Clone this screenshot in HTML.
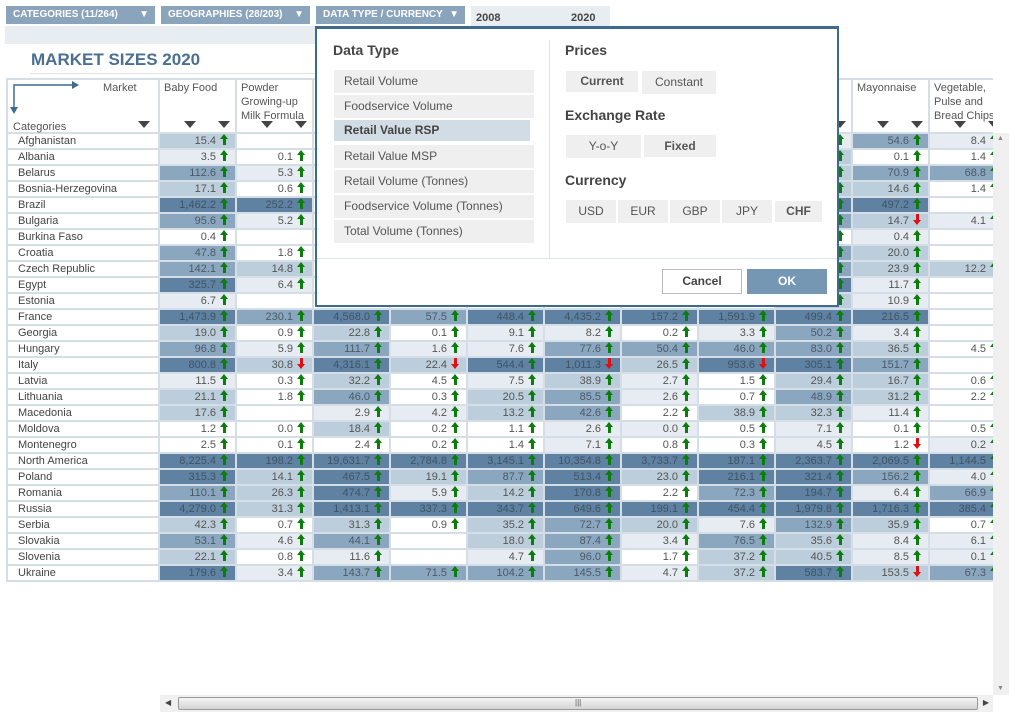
<!DOCTYPE html>
<html><head><meta charset="utf-8"><style>
*{box-sizing:border-box;margin:0;padding:0}
body{width:1015px;height:717px;background:#fff;font-family:"Liberation Sans",sans-serif;position:relative;overflow:hidden;color:#555}
.btn{position:absolute;top:6px;height:18px;background:#8aa4bc;color:#fff;font-size:10px;font-weight:bold;line-height:18px;padding-left:7px}
.btn b{position:absolute;right:6px;top:0;font-size:10px}
.wrap{position:absolute;left:0;top:0;width:993px;height:717px;overflow:hidden}
table{position:absolute;left:6px;top:78px;border-spacing:2px;background:#d5dee7;table-layout:fixed;width:982px}
td{height:14px;font-size:11px;text-align:right;padding-right:6px;white-space:nowrap;overflow:hidden;line-height:14px;background:#fff;color:#555}
td.n{text-align:left;padding-left:10px;color:#444}
.d{background:#5f82a3;color:#3f5366}.m{background:#8ba7bf;color:#4a5a6a}.l{background:#bccddb}.x{background:#e6ecf1}.w{background:#fff}
.u,.dn{display:inline-block;position:relative;width:9px;height:11px;vertical-align:-1px;margin-left:4px}
.u::before{content:"";position:absolute;left:0;top:0;border-left:4.5px solid transparent;border-right:4.5px solid transparent;border-bottom:5px solid #0a7d0a}
.u::after{content:"";position:absolute;left:3px;top:5px;width:3px;height:6px;background:#0a7d0a}
.dn::before{content:"";position:absolute;left:0;bottom:0;border-left:4.5px solid transparent;border-right:4.5px solid transparent;border-top:5px solid #e01010}
.dn::after{content:"";position:absolute;left:3px;top:0;width:3px;height:6px;background:#e01010}
th{height:52px;background:#fff;font-weight:normal;font-size:11px;text-align:left;vertical-align:top;padding:1px 4px;color:#555;line-height:14px;position:relative}
.s{position:absolute;bottom:4px;width:0;height:0;border-left:6px solid transparent;border-right:6px solid transparent;border-top:7px solid #444}
.dlg{position:absolute;left:315px;top:26px;width:524px;height:281px;background:#fff;border:2px solid #3e6a90;border-top-width:3px}
.h{position:absolute;font-size:14px;font-weight:bold;color:#444}
.li{position:absolute;left:17px;width:200px;height:23px;background:#efefef;font-size:12px;line-height:23px;padding-left:10px;color:#555}
.sel{background:#d2dce5;font-weight:bold;color:#444}
.bx{position:absolute;height:23px;background:#efefef;font-size:12px;line-height:23px;text-align:center;color:#555}
</style></head><body>
<div style="position:absolute;left:5px;top:26px;width:310px;height:18px;background:#e8edf1"></div>
<div class="btn" style="left:6px;width:149px">CATEGORIES (11/264)<b>▼</b></div>
<div class="btn" style="left:161px;width:149px">GEOGRAPHIES (28/203)<b>▼</b></div>
<div class="btn" style="left:316px;width:149px">DATA TYPE / CURRENCY<b>▼</b></div>
<div style="position:absolute;left:471px;top:6px;width:139px;height:21px;background:#e8edf1;font-size:11px;font-weight:bold;color:#444;line-height:25px"><span style="position:absolute;left:5px">2008</span><span style="position:absolute;left:100px">2020</span></div>
<div style="position:absolute;left:31px;top:50px;font-size:17px;font-weight:bold;color:#4a6f93">MARKET SIZES 2020</div>
<div style="position:absolute;left:30px;top:73px;width:290px;height:1px;background:#dde3e8"></div>
<div class="wrap">
<table>
<colgroup><col style="width:150px"><col style="width:75px"><col style="width:75px"><col style="width:75px"><col style="width:75px"><col style="width:75px"><col style="width:75px"><col style="width:75px"><col style="width:75px"><col style="width:75px"><col style="width:75px"><col style="width:75px"></colgroup>
<tr><th style="padding:0"><svg width="150" height="53" style="position:absolute;left:0;top:0"><path d="M6 27V5H64" fill="none" stroke="#3e6a90" stroke-width="1.5"/><path d="M64 1l7 4-7 4z" fill="#3e6a90"/><path d="M2 27h8l-4 7z" fill="#3e6a90"/></svg><span style="position:absolute;left:95px;top:1px">Market</span><span style="position:absolute;left:5px;top:40px">Categories</span><span class="s" style="left:130px"></span></th>
<th>Baby Food<span class="s" style="left:24px"></span><span class="s" style="left:58px"></span></th>
<th>Powder Growing-up Milk Formula<span class="s" style="left:24px"></span><span class="s" style="left:58px"></span></th>
<th></th><th></th><th></th><th></th><th></th><th></th>
<th>n<span class="s" style="left:58px"></span></th>
<th>Mayonnaise<span class="s" style="left:24px"></span><span class="s" style="left:58px"></span></th>
<th>Vegetable, Pulse and Bread Chips<span class="s" style="left:24px"></span><span class="s" style="left:58px"></span></th></tr>
<tr><td class="n">Afghanistan</td><td class="l">15.4<i class="u"></i></td><td class="w"></td><td></td><td></td><td></td><td></td><td></td><td></td><td class="x"><i class="u"></i></td><td class="m">54.6<i class="u"></i></td><td class="x">8.4<i class="u"></i></td></tr>
<tr><td class="n">Albania</td><td class="x">3.5<i class="u"></i></td><td class="w">0.1<i class="u"></i></td><td></td><td></td><td></td><td></td><td></td><td></td><td class="l"><i class="u"></i></td><td class="w">0.1<i class="u"></i></td><td class="w">1.4<i class="u"></i></td></tr>
<tr><td class="n">Belarus</td><td class="m">112.6<i class="u"></i></td><td class="x">5.3<i class="u"></i></td><td></td><td></td><td></td><td></td><td></td><td></td><td class="l"><i class="u"></i></td><td class="m">70.9<i class="u"></i></td><td class="m">68.8<i class="u"></i></td></tr>
<tr><td class="n">Bosnia-Herzegovina</td><td class="l">17.1<i class="u"></i></td><td class="w">0.6<i class="u"></i></td><td></td><td></td><td></td><td></td><td></td><td></td><td class="l"><i class="u"></i></td><td class="l">14.6<i class="u"></i></td><td class="w">1.4<i class="u"></i></td></tr>
<tr><td class="n">Brazil</td><td class="d">1,462.2<i class="u"></i></td><td class="d">252.2<i class="u"></i></td><td></td><td></td><td></td><td></td><td></td><td></td><td class="d"><i class="u"></i></td><td class="d">497.2<i class="u"></i></td><td class="w"></td></tr>
<tr><td class="n">Bulgaria</td><td class="m">95.6<i class="u"></i></td><td class="x">5.2<i class="u"></i></td><td></td><td></td><td></td><td></td><td></td><td></td><td class="m"><i class="u"></i></td><td class="l">14.7<i class="dn"></i></td><td class="x">4.1<i class="u"></i></td></tr>
<tr><td class="n">Burkina Faso</td><td class="w">0.4<i class="u"></i></td><td class="w"></td><td></td><td></td><td></td><td></td><td></td><td></td><td class="w"><i class="u"></i></td><td class="x">0.4<i class="u"></i></td><td class="w"></td></tr>
<tr><td class="n">Croatia</td><td class="m">47.8<i class="u"></i></td><td class="w">1.8<i class="u"></i></td><td></td><td></td><td></td><td></td><td></td><td></td><td class="m"><i class="u"></i></td><td class="l">20.0<i class="u"></i></td><td class="w"></td></tr>
<tr><td class="n">Czech Republic</td><td class="m">142.1<i class="u"></i></td><td class="l">14.8<i class="u"></i></td><td></td><td></td><td></td><td></td><td></td><td></td><td class="m"><i class="u"></i></td><td class="l">23.9<i class="u"></i></td><td class="l">12.2<i class="u"></i></td></tr>
<tr><td class="n">Egypt</td><td class="d">325.7<i class="u"></i></td><td class="x">6.4<i class="u"></i></td><td></td><td></td><td></td><td></td><td></td><td></td><td class="d"><i class="u"></i></td><td class="x">11.7<i class="u"></i></td><td class="w"></td></tr>
<tr><td class="n">Estonia</td><td class="x">6.7<i class="u"></i></td><td class="w"></td><td></td><td></td><td></td><td></td><td></td><td></td><td class="l"><i class="u"></i></td><td class="x">10.9<i class="u"></i></td><td class="w"></td></tr>
<tr><td class="n">France</td><td class="d">1,473.9<i class="u"></i></td><td class="m">230.1<i class="u"></i></td><td class="d">4,568.0<i class="u"></i></td><td class="m">57.5<i class="u"></i></td><td class="d">448.4<i class="u"></i></td><td class="d">4,435.2<i class="u"></i></td><td class="d">157.2<i class="u"></i></td><td class="d">1,591.9<i class="u"></i></td><td class="d">499.4<i class="u"></i></td><td class="d">216.5<i class="u"></i></td><td class="w"></td></tr>
<tr><td class="n">Georgia</td><td class="l">19.0<i class="u"></i></td><td class="w">0.9<i class="u"></i></td><td class="l">22.8<i class="u"></i></td><td class="w">0.1<i class="u"></i></td><td class="x">9.1<i class="u"></i></td><td class="x">8.2<i class="u"></i></td><td class="w">0.2<i class="u"></i></td><td class="x">3.3<i class="u"></i></td><td class="m">50.2<i class="u"></i></td><td class="x">3.4<i class="u"></i></td><td class="w"></td></tr>
<tr><td class="n">Hungary</td><td class="m">96.8<i class="u"></i></td><td class="x">5.9<i class="u"></i></td><td class="m">111.7<i class="u"></i></td><td class="x">1.6<i class="u"></i></td><td class="x">7.6<i class="u"></i></td><td class="m">77.6<i class="u"></i></td><td class="m">50.4<i class="u"></i></td><td class="m">46.0<i class="u"></i></td><td class="m">83.0<i class="u"></i></td><td class="l">36.5<i class="u"></i></td><td class="w">4.5<i class="u"></i></td></tr>
<tr><td class="n">Italy</td><td class="d">800.8<i class="u"></i></td><td class="l">30.8<i class="dn"></i></td><td class="d">4,316.1<i class="u"></i></td><td class="l">22.4<i class="dn"></i></td><td class="d">544.4<i class="u"></i></td><td class="d">1,011.3<i class="dn"></i></td><td class="l">26.5<i class="u"></i></td><td class="d">953.6<i class="dn"></i></td><td class="d">305.1<i class="u"></i></td><td class="m">151.7<i class="u"></i></td><td class="w"></td></tr>
<tr><td class="n">Latvia</td><td class="x">11.5<i class="u"></i></td><td class="w">0.3<i class="u"></i></td><td class="l">32.2<i class="u"></i></td><td class="w">4.5<i class="u"></i></td><td class="x">7.5<i class="u"></i></td><td class="l">38.9<i class="u"></i></td><td class="x">2.7<i class="u"></i></td><td class="w">1.5<i class="u"></i></td><td class="l">29.4<i class="u"></i></td><td class="l">16.7<i class="u"></i></td><td class="w">0.6<i class="u"></i></td></tr>
<tr><td class="n">Lithuania</td><td class="l">21.1<i class="u"></i></td><td class="w">1.8<i class="u"></i></td><td class="m">46.0<i class="u"></i></td><td class="w">0.3<i class="u"></i></td><td class="l">20.5<i class="u"></i></td><td class="m">85.5<i class="u"></i></td><td class="x">2.6<i class="u"></i></td><td class="w">0.7<i class="u"></i></td><td class="m">48.9<i class="u"></i></td><td class="l">31.2<i class="u"></i></td><td class="w">2.2<i class="u"></i></td></tr>
<tr><td class="n">Macedonia</td><td class="l">17.6<i class="u"></i></td><td class="w"></td><td class="x">2.9<i class="u"></i></td><td class="x">4.2<i class="u"></i></td><td class="l">13.2<i class="u"></i></td><td class="m">42.6<i class="u"></i></td><td class="w">2.2<i class="u"></i></td><td class="l">38.9<i class="u"></i></td><td class="l">32.3<i class="u"></i></td><td class="x">11.4<i class="u"></i></td><td class="w"></td></tr>
<tr><td class="n">Moldova</td><td class="w">1.2<i class="u"></i></td><td class="w">0.0<i class="u"></i></td><td class="l">18.4<i class="u"></i></td><td class="w">0.2<i class="u"></i></td><td class="w">1.1<i class="u"></i></td><td class="x">2.6<i class="u"></i></td><td class="x">0.0<i class="u"></i></td><td class="w">0.5<i class="u"></i></td><td class="x">7.1<i class="u"></i></td><td class="w">0.1<i class="u"></i></td><td class="w">0.5<i class="u"></i></td></tr>
<tr><td class="n">Montenegro</td><td class="w">2.5<i class="u"></i></td><td class="w">0.1<i class="u"></i></td><td class="w">2.4<i class="u"></i></td><td class="w">0.2<i class="u"></i></td><td class="w">1.4<i class="u"></i></td><td class="x">7.1<i class="u"></i></td><td class="w">0.8<i class="u"></i></td><td class="w">0.3<i class="u"></i></td><td class="x">4.5<i class="u"></i></td><td class="w">1.2<i class="dn"></i></td><td class="x">0.2<i class="u"></i></td></tr>
<tr><td class="n">North America</td><td class="d">8,225.4<i class="u"></i></td><td class="d">198.2<i class="u"></i></td><td class="d">19,631.7<i class="u"></i></td><td class="d">2,784.8<i class="u"></i></td><td class="d">3,145.1<i class="u"></i></td><td class="d">10,354.8<i class="u"></i></td><td class="d">3,733.7<i class="u"></i></td><td class="d">187.1<i class="u"></i></td><td class="d">2,363.7<i class="u"></i></td><td class="d">2,069.5<i class="u"></i></td><td class="d">1,144.5<i class="u"></i></td></tr>
<tr><td class="n">Poland</td><td class="d">315.3<i class="u"></i></td><td class="l">14.1<i class="u"></i></td><td class="d">467.5<i class="u"></i></td><td class="l">19.1<i class="u"></i></td><td class="m">87.7<i class="u"></i></td><td class="d">513.4<i class="u"></i></td><td class="l">23.0<i class="u"></i></td><td class="d">216.1<i class="u"></i></td><td class="d">321.4<i class="u"></i></td><td class="m">156.2<i class="u"></i></td><td class="x">4.0<i class="u"></i></td></tr>
<tr><td class="n">Romania</td><td class="m">110.1<i class="u"></i></td><td class="l">26.3<i class="u"></i></td><td class="d">474.7<i class="u"></i></td><td class="x">5.9<i class="u"></i></td><td class="l">14.2<i class="u"></i></td><td class="d">170.8<i class="u"></i></td><td class="w">2.2<i class="u"></i></td><td class="m">72.3<i class="u"></i></td><td class="d">194.7<i class="u"></i></td><td class="x">6.4<i class="u"></i></td><td class="m">66.9<i class="u"></i></td></tr>
<tr><td class="n">Russia</td><td class="d">4,279.0<i class="u"></i></td><td class="l">31.3<i class="u"></i></td><td class="d">1,413.1<i class="u"></i></td><td class="d">337.3<i class="u"></i></td><td class="d">343.7<i class="u"></i></td><td class="d">649.6<i class="u"></i></td><td class="d">199.1<i class="u"></i></td><td class="d">454.4<i class="u"></i></td><td class="d">1,979.8<i class="u"></i></td><td class="d">1,716.3<i class="u"></i></td><td class="d">385.4<i class="u"></i></td></tr>
<tr><td class="n">Serbia</td><td class="l">42.3<i class="u"></i></td><td class="w">0.7<i class="u"></i></td><td class="l">31.3<i class="u"></i></td><td class="w">0.9<i class="u"></i></td><td class="l">35.2<i class="u"></i></td><td class="m">72.7<i class="u"></i></td><td class="l">20.0<i class="u"></i></td><td class="x">7.6<i class="u"></i></td><td class="m">132.9<i class="u"></i></td><td class="l">35.9<i class="u"></i></td><td class="w">0.7<i class="u"></i></td></tr>
<tr><td class="n">Slovakia</td><td class="m">53.1<i class="u"></i></td><td class="x">4.6<i class="u"></i></td><td class="m">44.1<i class="u"></i></td><td class="w"></td><td class="l">18.0<i class="u"></i></td><td class="m">87.4<i class="u"></i></td><td class="x">3.4<i class="u"></i></td><td class="m">76.5<i class="u"></i></td><td class="l">35.6<i class="u"></i></td><td class="x">8.4<i class="u"></i></td><td class="x">6.1<i class="u"></i></td></tr>
<tr><td class="n">Slovenia</td><td class="l">22.1<i class="u"></i></td><td class="w">0.8<i class="u"></i></td><td class="x">11.6<i class="u"></i></td><td class="w"></td><td class="x">4.7<i class="u"></i></td><td class="m">96.0<i class="u"></i></td><td class="w">1.7<i class="u"></i></td><td class="l">37.2<i class="u"></i></td><td class="l">40.5<i class="u"></i></td><td class="x">8.5<i class="u"></i></td><td class="x">0.1<i class="u"></i></td></tr>
<tr><td class="n">Ukraine</td><td class="d">179.6<i class="u"></i></td><td class="x">3.4<i class="u"></i></td><td class="m">143.7<i class="u"></i></td><td class="m">71.5<i class="u"></i></td><td class="m">104.2<i class="u"></i></td><td class="m">145.5<i class="u"></i></td><td class="x">4.7<i class="u"></i></td><td class="l">37.2<i class="u"></i></td><td class="d">583.7<i class="u"></i></td><td class="l">153.5<i class="dn"></i></td><td class="m">67.3<i class="u"></i></td></tr>
</table>
</div>
<div style="position:absolute;left:993px;top:133px;width:16px;height:562px;background:#f0f0f0"><span style="position:absolute;left:4px;top:2px;font-size:7px;color:#888">▲</span><span style="position:absolute;left:4px;bottom:3px;font-size:7px;color:#888">▼</span></div>
<div style="position:absolute;left:160px;top:695px;width:833px;height:17px;background:#f0f0f0"><span style="position:absolute;left:5px;top:3px;font-size:8px;color:#444">◀</span><div style="position:absolute;left:18px;top:2px;width:800px;height:13px;border:1px solid #999;border-radius:2px;background:linear-gradient(#f4f4f4,#d4d4d4)"><span style="position:absolute;left:396px;top:0;font-size:8px;color:#555">|||</span></div><span style="position:absolute;right:4px;top:3px;font-size:8px;color:#444">▶</span></div>

<div class="dlg">
<div class="h" style="left:16px;top:13px">Data Type</div>
<div class="li" style="top:41px">Retail Volume</div>
<div class="li" style="top:66px">Foodservice Volume</div>
<div class="li sel" style="top:91px;height:21px;width:196px;line-height:21px">Retail Value RSP</div>
<div class="li" style="top:116px">Retail Value MSP</div>
<div class="li" style="top:141px">Retail Volume (Tonnes)</div>
<div class="li" style="top:166px">Foodservice Volume (Tonnes)</div>
<div class="li" style="top:191px">Total Volume (Tonnes)</div>
<div style="position:absolute;left:232px;top:11px;width:1px;height:218px;background:#dde3e8"></div>
<div class="h" style="left:248px;top:13px">Prices</div>
<div class="bx sel" style="left:249px;top:42px;width:72px;height:21px;line-height:21px">Current</div>
<div class="bx" style="left:325px;top:42px;width:74px">Constant</div>
<div class="h" style="left:248px;top:78px">Exchange Rate</div>
<div class="bx" style="left:249px;top:106px;width:75px">Y-o-Y</div>
<div class="bx sel" style="left:327px;top:106px;width:72px;height:22px;line-height:22px">Fixed</div>
<div class="h" style="left:248px;top:143px">Currency</div>
<div class="bx" style="left:249px;top:171px;width:50px">USD</div>
<div class="bx" style="left:301px;top:171px;width:50px">EUR</div>
<div class="bx" style="left:353px;top:171px;width:50px">GBP</div>
<div class="bx" style="left:405px;top:171px;width:50px">JPY</div>
<div class="bx sel" style="left:458px;top:172px;width:47px;height:21px;line-height:21px">CHF</div>
<div style="position:absolute;left:0;top:229px;width:520px;height:1px;background:#dde3e8"></div>
<div style="position:absolute;left:345px;top:240px;width:80px;height:25px;border:1px solid #bbb;font-size:12px;font-weight:bold;color:#444;text-align:center;line-height:23px">Cancel</div>
<div style="position:absolute;left:430px;top:240px;width:80px;height:25px;background:#7697b3;font-size:12px;font-weight:bold;color:#fff;text-align:center;line-height:25px">OK</div>
</div>
</body></html>
